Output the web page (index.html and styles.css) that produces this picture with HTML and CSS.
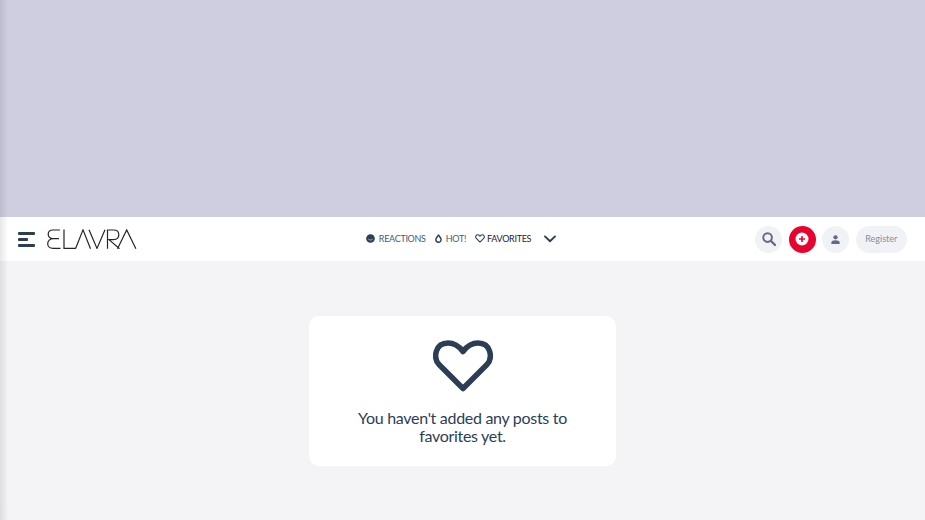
FILE: index.html
```html
<!DOCTYPE html>
<html lang="en">
<head>
<meta charset="utf-8">
<title>Elavra - Favorites</title>
<link rel="stylesheet" href="styles.css">
</head>
<body>
<div class="edge-shadow"></div>
<div class="hero"></div>
<header class="header">
  <div class="brand">
    <button class="burger" aria-label="Menu"><span class="bar"></span><span class="bar bar-short"></span><span class="bar"></span></button>
    <svg class="logo" viewBox="0 0 90 20" width="90" height="20" role="img" aria-label="ELAVRA">
      <g fill="none" stroke="#22262c" stroke-width="1.2">
        <path d="M13 1H6C3 1 1.200 3 1.200 5.300S3 9.700 6 9.700H12M6 9.700C3 9.700 .7 12 .7 14.700S3 19.400 6 19.400H13.500"/>
        <path d="M17 .6V19.400H28.500"/>
        <path d="M28.500 19.700L36 .9L43.500 19.700"/>
        <path d="M42 .8L50 19.400L58 .8"/>
        <path d="M60.500 19.700V1H66.500C70 1 71.800 3.200 71.800 5.800S70 10.600 66.500 10.600H62L72.500 19.700"/>
        <path d="M70.500 19.700L79.700 .9L88.900 19.700"/>
      </g>
    </svg>
  </div>
  <nav class="nav">
    <a class="nav-item nav-muted nav-gap-reactions">
      <svg class="nav-icon" viewBox="0 0 10 10" width="9" height="9"><circle cx="5" cy="5" r="4.800" fill="#2c3e54"/><path d="M2.600 5.600C3.400 7 6.600 7 7.400 5.600" fill="none" stroke="#fff" stroke-width=".7"/></svg>
      REACTIONS
    </a>
    <a class="nav-item nav-muted nav-gap-hot">
      <svg class="nav-icon" viewBox="0 0 10 12" width="7" height="9"><path d="M5 .6C5.600 3 8.800 4.600 8.800 7.600A3.800 3.800 0 0 1 1.200 7.600C1.200 4.600 4.400 3 5 .6Z" fill="none" stroke="#2c3e54" stroke-width="2"/></svg>
      HOT!
    </a>
    <a class="nav-item nav-active nav-gap-fav">
      <svg class="nav-icon" viewBox="0 0 12 11" width="10" height="9"><path d="M6 9.800L1.500 5.400C-.4 3.200 1.600 .4 3.700 1C4.800 1.200 5.500 2 6 2.800C6.500 2 7.200 1.200 8.300 1C10.400 .4 12.400 3.200 10.500 5.400Z" fill="none" stroke="#2c3e54" stroke-width="1.300" stroke-linejoin="round"/></svg>
      FAVORITES
    </a>
    <button class="more" aria-label="More">
      <svg viewBox="0 0 12 8" width="12" height="8"><path d="M1 1.400L6 6.200L11 1.400" fill="none" stroke="#2c3e54" stroke-width="1.900" stroke-linecap="round" stroke-linejoin="round"/></svg>
    </button>
  </nav>
  <div class="actions">
    <button class="round" aria-label="Search">
      <svg viewBox="0 0 14 14" width="14" height="14"><circle cx="5.600" cy="5.600" r="4.300" fill="none" stroke="#66688a" stroke-width="2"/><path d="M9 9L13 13" stroke="#66688a" stroke-width="2.400" stroke-linecap="round"/></svg>
    </button>
    <button class="round round-red" aria-label="Add">
      <svg viewBox="0 0 14 14" width="14" height="14"><circle cx="7" cy="7" r="6.500" fill="#fff"/><path d="M7 4V10M4 7H10" stroke="#e8042c" stroke-width="1.600"/></svg>
    </button>
    <button class="round" aria-label="Account">
      <svg viewBox="0 0 10 10" width="9" height="9"><circle cx="5" cy="2.600" r="2.400" fill="#66688a"/><path d="M.4 10V8.400C.4 6.600 2.400 5.800 5 5.800S9.600 6.600 9.600 8.400V10Z" fill="#66688a"/></svg>
    </button>
    <a class="register">Register</a>
  </div>
</header>
<main class="main">
  <section class="card">
    <svg class="card-heart" viewBox="0 0 60 52" width="60" height="52"><path d="M30 48.500L6 24.500C0 18 2 3 15 3C22 3 27 7.500 30 11.500C33 7.500 38 3 45 3C58 3 60 18 54 24.500Z" fill="none" stroke="#2c3e54" stroke-width="5.500" stroke-linejoin="round"/></svg>
    <p class="card-text">You haven't added any posts to favorites yet.</p>
  </section>
</main>
</body>
</html>
```
FILE: styles.css
```css
* { box-sizing: border-box; }
html, body { height: 100%; }
body {
  margin: 0;
  background: #f4f4f6;
  font-family: "Lato", "Open Sans", sans-serif;
  color: #2c3e54;
  overflow: hidden;
}
.edge-shadow {
  position: fixed;
  top: 0;
  bottom: 0;
  left: 0;
  width: 8px;
  background: linear-gradient(to right, rgba(60, 60, 80, .12), rgba(60, 60, 80, 0));
  pointer-events: none;
}
.hero { height: 217px; background: #cecee0; }
.header {
  height: 44px;
  background: #fff;
  display: grid;
  grid-template-columns: 1fr auto 1fr;
  align-items: center;
  padding: 0 18px;
}
.brand { display: flex; align-items: center; gap: 12px; }
.burger {
  width: 17px;
  padding: 0;
  border: 0;
  background: none;
  display: flex;
  flex-direction: column;
  gap: 3px;
}
.bar { display: block; height: 3px; width: 17px; background: #2c3e54; border-radius: 1px; }
.bar-short { width: 10px; }
.logo { display: block; }
.nav { display: flex; align-items: center; padding-right: 3px; font-size: 9px; letter-spacing: -.3px; }
.nav-item { display: flex; align-items: center; margin-right: 9px; margin-bottom: 1px; white-space: nowrap; }
.nav-gap-reactions { gap: 4px; }
.nav-gap-hot { gap: 4px; }
.nav-gap-fav { gap: 2px; margin-right: 13px; }
.nav-muted { color: #4c5a70; }
.nav-active { color: #1c2530; }
.nav-icon { display: block; }
.more { padding: 0; border: 0; background: none; display: flex; }
.actions { display: flex; justify-content: flex-end; align-items: center; gap: 6.500px; }
.round {
  width: 27px;
  height: 27px;
  padding: 0;
  border: 0;
  border-radius: 50%;
  background: #f1f2f6;
  display: flex;
  align-items: center;
  justify-content: center;
}
.round-red { background: #e8042c; }
.register {
  height: 27px;
  width: 51.500px;
  padding-bottom: 1px;
  border-radius: 14px;
  background: #f1f2f6;
  color: #8a8ca0;
  font-size: 9px;
  display: flex;
  align-items: center;
  justify-content: center;
}
.main { display: flex; justify-content: center; padding-top: 55px; }
.card {
  width: 307px;
  height: 150px;
  background: #fff;
  border-radius: 10px;
  display: flex;
  flex-direction: column;
  align-items: center;
  padding-top: 24px;
}
.card-heart { display: block; }
.card-text {
  margin: 16.500px 0 0;
  width: 240px;
  text-align: center;
  font-size: 16px;
  letter-spacing: -.3px;
  line-height: 18px;
  color: #2c3e54;
}
```
